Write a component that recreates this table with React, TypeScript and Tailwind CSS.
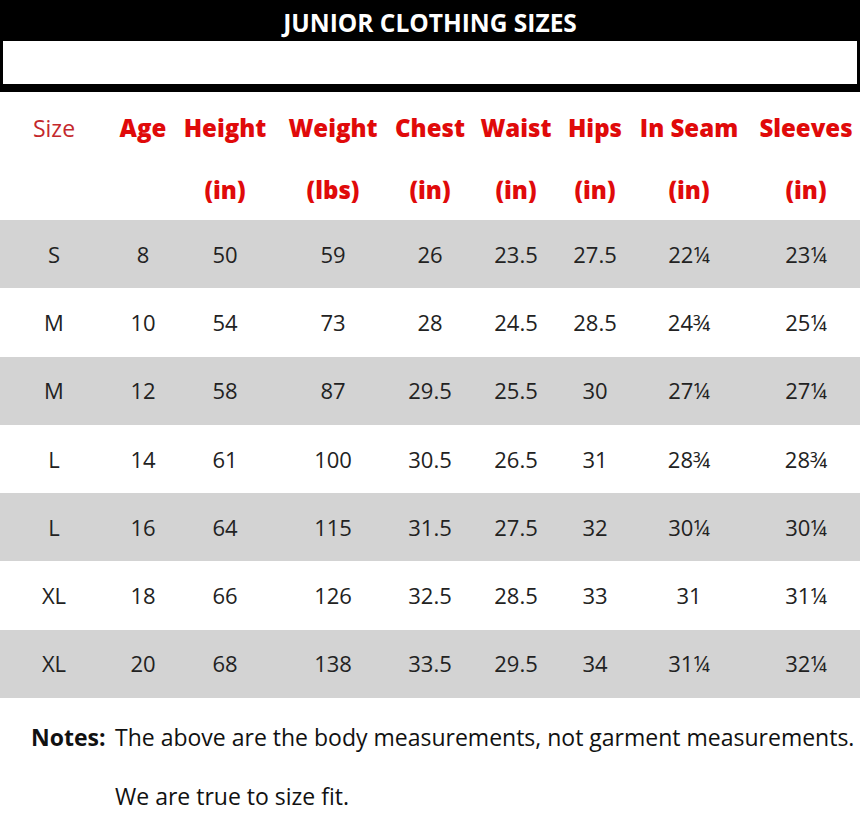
const rows = [
  ["S", "8", "50", "59", "26", "23.5", "27.5", "22¼", "23¼"],
  ["M", "10", "54", "73", "28", "24.5", "28.5", "24¾", "25¼"],
  ["M", "12", "58", "87", "29.5", "25.5", "30", "27¼", "27¼"],
  ["L", "14", "61", "100", "30.5", "26.5", "31", "28¾", "28¾"],
  ["L", "16", "64", "115", "31.5", "27.5", "32", "30¼", "30¼"],
  ["XL", "18", "66", "126", "32.5", "28.5", "33", "31", "31¼"],
  ["XL", "20", "68", "138", "33.5", "29.5", "34", "31¼", "32¼"],
];

const heads = ["Age", "Height", "Weight", "Chest", "Waist", "Hips", "In Seam", "Sleeves"];
const units = ["", "(in)", "(lbs)", "(in)", "(in)", "(in)", "(in)", "(in)"];

const cols = "grid grid-cols-[108px_70px_94px_122px_72px_100px_58px_130px_104px]";

export default function App() {
  return (
    <div className="w-[860px] h-[824px] bg-white overflow-hidden font-['Open_Sans','Noto_Sans',sans-serif]">
      <div className="bg-black h-[92px] flex flex-col">
        <h1 className="h-[41px] flex items-center justify-center text-white font-bold text-[24.5px] pt-[6px]">
          JUNIOR CLOTHING SIZES
        </h1>
        <div className="mx-[3px] h-[43px] bg-white" />
      </div>

      <div className={`${cols} pt-[4px]`}>
        <div className="h-[64px] flex items-center justify-center text-[23px] text-[#c4282c]">Size</div>
        {heads.map((h) => (
          <div key={h} className="h-[64px] flex items-center justify-center whitespace-nowrap text-[24px] font-extrabold text-[#e00a0a]">
            {h}
          </div>
        ))}
        <div className="h-[60px]" />
        {units.map((u, i) => (
          <div key={i} className="h-[60px] flex items-center justify-center text-[24px] font-extrabold text-[#e00a0a]">
            {u}
          </div>
        ))}
      </div>

      <div className="flex flex-col">
        {rows.map((r, i) => (
          <div key={i} className={`${cols} h-[68.3px] ${i % 2 === 0 ? "bg-[#d3d3d3]" : "bg-white"}`}>
            {r.map((c, j) => (
              <div key={j} className="flex items-center justify-center text-[22px] text-[#222]">
                {c}
              </div>
            ))}
          </div>
        ))}
      </div>

      <div className="pl-[31px] pt-[22px] text-[23px] text-[#111] whitespace-nowrap">
        <div className="flex h-[34px] items-center">
          <span className="font-bold w-[84px] shrink-0">Notes:</span>
          <span>The above are the body measurements, not garment measurements.</span>
        </div>
        <div className="pl-[84px] mt-[25px] h-[34px] flex items-center">We are true to size fit.</div>
      </div>
    </div>
  );
}
